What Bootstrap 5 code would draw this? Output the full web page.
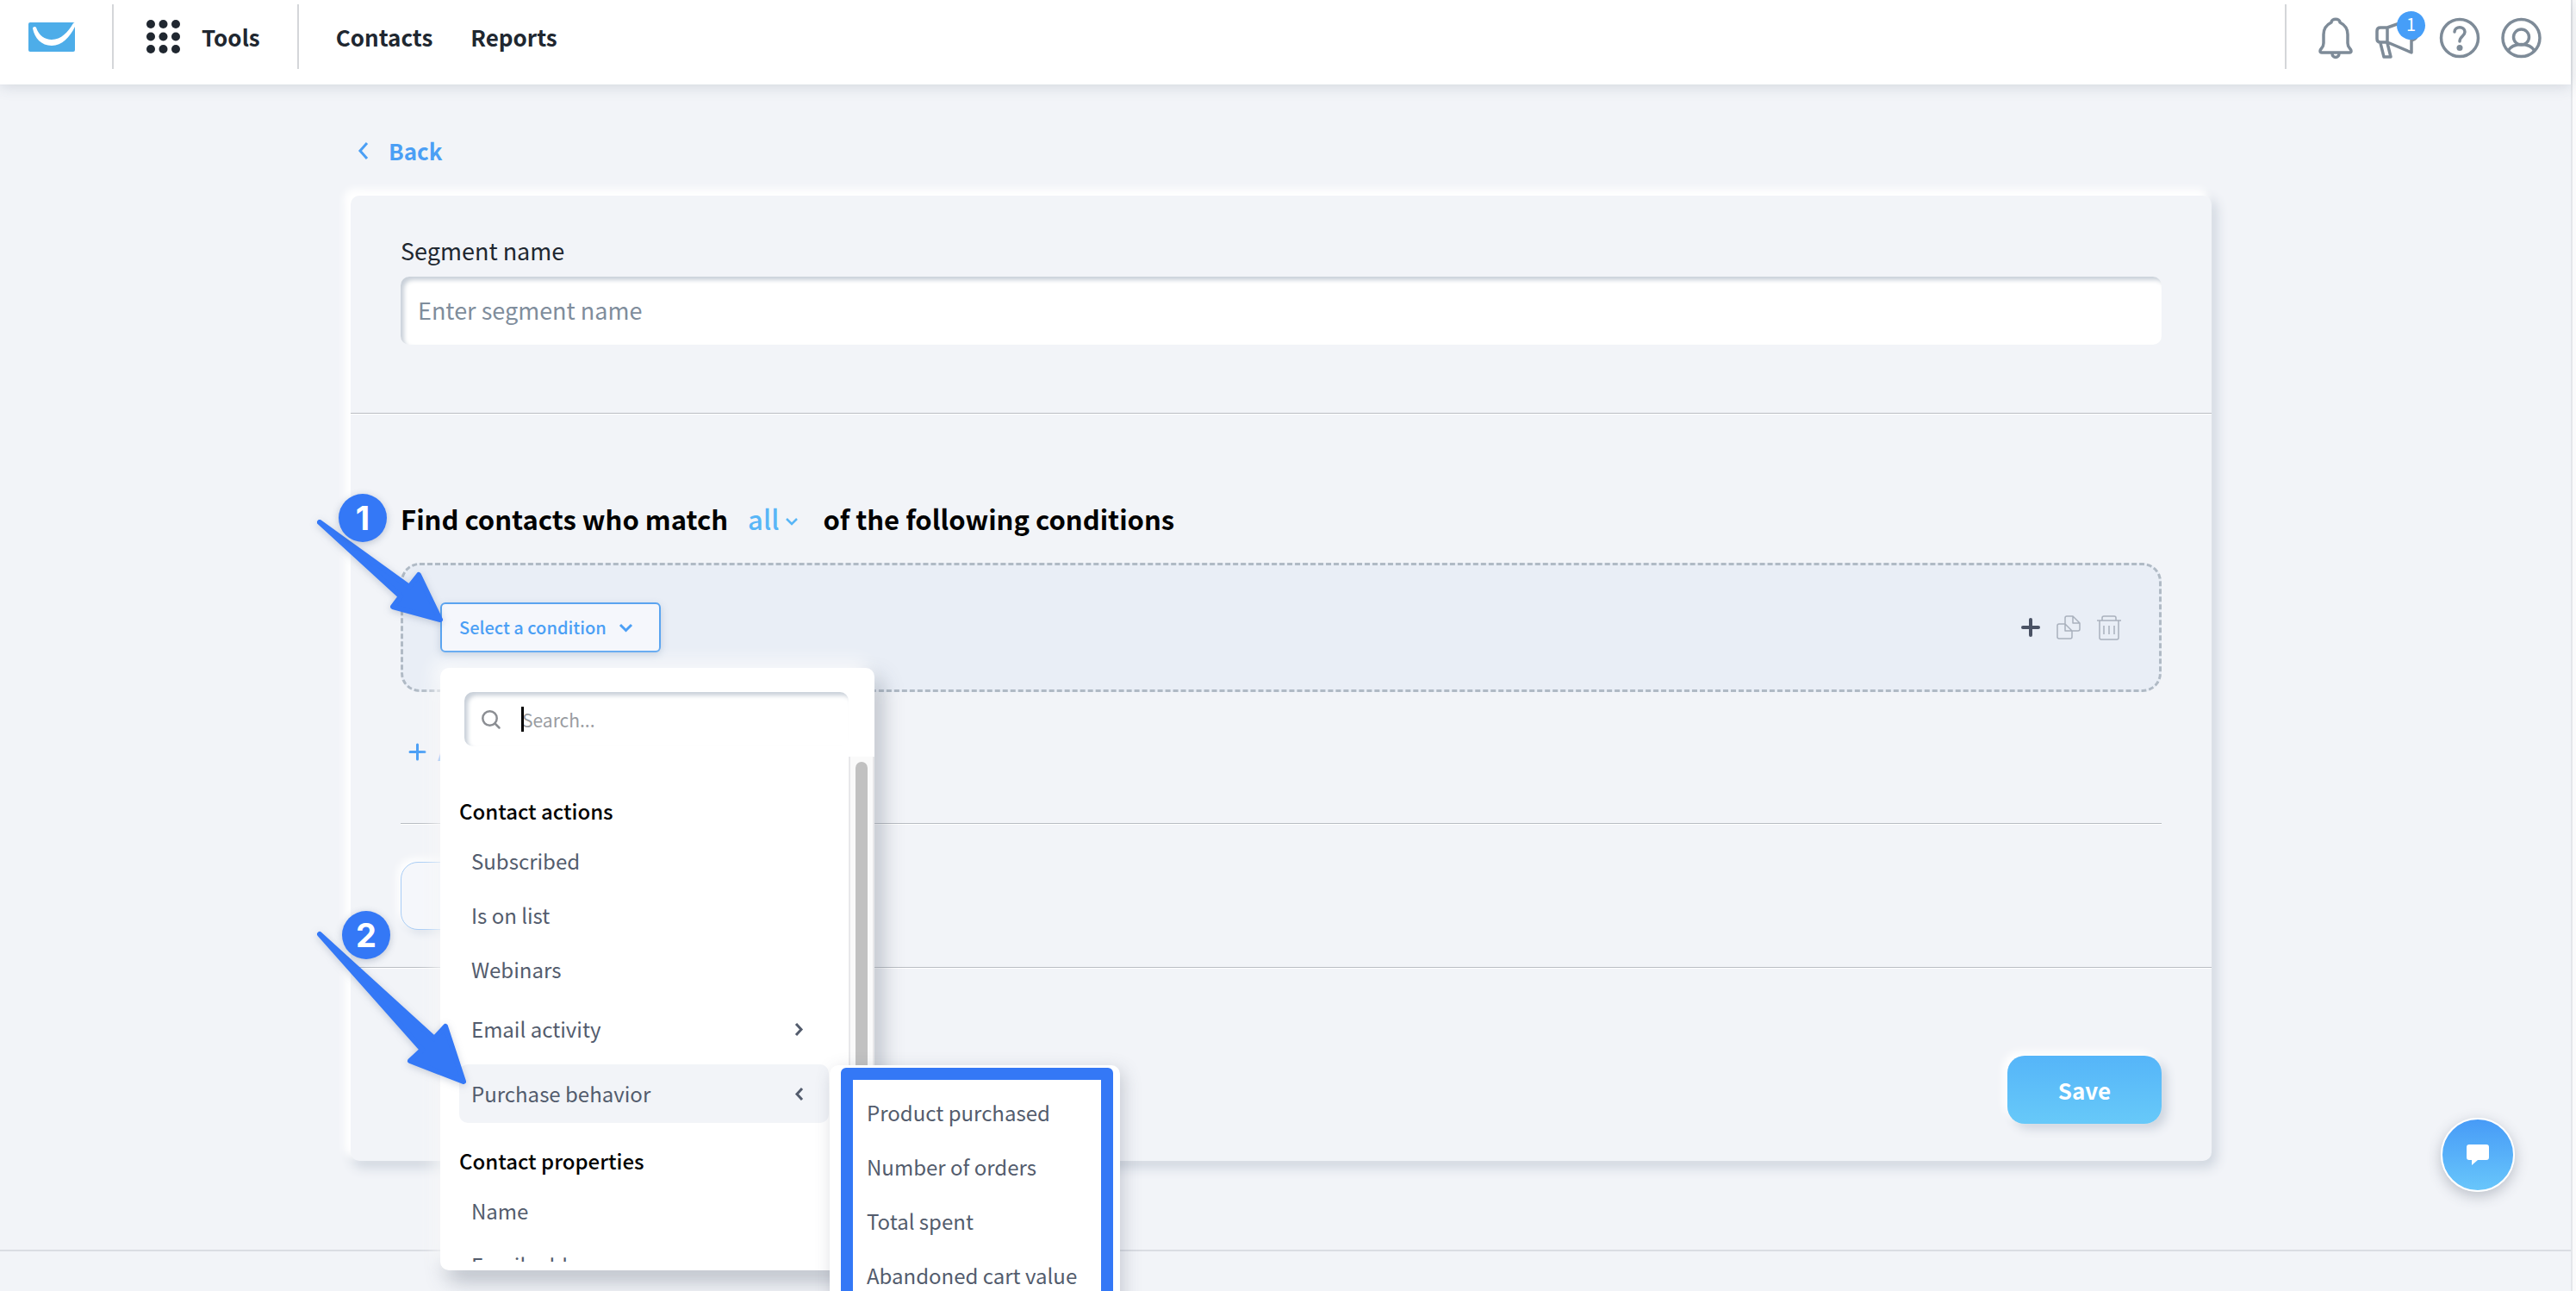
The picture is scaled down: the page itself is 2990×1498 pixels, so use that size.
<!DOCTYPE html>
<html lang="en">
<head>
<meta charset="utf-8">
<meta name="viewport" content="width=device-width, initial-scale=1">
<title>Create segment</title>
<link href="https://cdn.jsdelivr.net/npm/bootstrap@5.3.0/dist/css/bootstrap.min.css" rel="stylesheet">
<style>
:root { --ink:#202730; --slate:#535c6d; --sky:#4b9ff5; --pin:#3478f6; --page:#f2f4f8; --mist:#cfd5de; }
html { overflow: hidden; background: #fafafb; }
body { font-family: "Noto Sans CJK SC", "Open Sans", sans-serif; font-size: 26px; line-height: 36px; color: var(--ink); background: #fafafb; }
.page { margin-right: 4px; border-right: 2px solid #e4e6ea; background: var(--page); min-height: 100vh; }
svg { display: block; flex: none; overflow: visible; }
a { text-decoration: none; }
.plain-btn { border: 0; background: none; padding: 0; color: inherit; }

.topbar { height: 98px; padding: 5px 34px 18px 33px; background: #fff; box-shadow: 0 2px 16px rgba(60,75,100,.18); }
.topbar .nav-link { color: var(--ink); font-weight: 700; font-size: 26px; }
.rule-v { width: 2px; background: #d4d6d9; align-self: stretch; }
.tools { padding: 0 43px 0 38px; gap: 25px; }
.logo { margin-right: 43px; }
.main-links { padding-left: 43px; gap: 44px; }
.top-icons { padding-left: 36px; padding-top: 2px; gap: 25px; color: #7e8b98; }
.count { top: -7px; left: 25px; width: 33px; height: 33px; font-size: 20px; line-height: 30px; background: #469ef8; }

.content { max-width: 2160px; width: calc(100% - 80px); margin: 0 auto; }
.main-area { padding: 59px 10px 103px 0; }
.back { color: var(--sky); font-weight: 700; font-size: 26px; gap: 23px; padding-left: 8px; margin-bottom: 34px; width: max-content; }
.panel { border-radius: 10px; background: var(--page); box-shadow: -6px -6px 8px 2px #fff, 4px 6px 14px 2px #cfd6df; }
.panel > section { padding: 0 58px; }
.line { border-bottom: 1px solid #b9bdc3; box-shadow: 0 1px 0 #fff; margin-bottom: 1px; }
.name-part { padding-top: 46px !important; padding-bottom: 79px !important; }
.name-part label { display: block; font-size: 27px; margin-bottom: 12px; }
.sunk { border: 0; border-radius: 10px; background: #fff; box-shadow: inset 4px 4px 5px #c9d0d9; }
.name-input { height: 79px; width: 100%; padding: 0 20px 2px; font-size: 27px; }
.sunk::placeholder, .name-input::placeholder { color: #7f8d9c; opacity: 1; }
.match-part { padding-top: 101px !important; padding-bottom: 43px !important; }
.match { font-size: 31px; line-height: 40px; font-weight: 700; color: #000; margin-bottom: 31px; gap: 29px; }
.match .plain-btn { font-weight: 500; color: #58b6f7; gap: 8px; margin-left: -6px; }
.match svg { margin-top: 6px; }
.cond { height: 150px; border: 3px dashed #b0bac5; border-radius: 22px; background: #e9eef6; padding: 0 44px 0 43px; }
.pick { height: 58px; width: 256px; border: 2px solid #5aa4f0; border-radius: 6px; background: #f5f7fc; color: var(--sky); font-size: 20px; font-weight: 500; gap: 15px; padding: 0 20px; box-shadow: 0 3px 8px rgba(80,110,150,.25); white-space: nowrap; }
.cond-tools { gap: 19px; color: #a9b1bd; }
.add { color: var(--sky); margin-top: 51px; margin-bottom: 65px; padding-left: 10px; gap: 14px; font-weight: 500; }
.ghost { height: 79px; width: 260px; margin-top: 44px; border: 1px solid #a9cdf5; border-radius: 20px; background: #f5f7fb; box-shadow: -4px -4px 10px #fff, 4px 4px 10px #d9dfe8; }
.save-part { padding-top: 101px !important; padding-bottom: 43px !important; }
.save { width: 179px; height: 79px; border-radius: 20px; border: 0; color: #fff; font-weight: 700; font-size: 26px; background: linear-gradient(#55b5f9, #67c9f9); box-shadow: -5px -5px 10px #fff, 6px 6px 12px #cdd4de; }
.page-end { border-top: 2px solid #dadde3; height: 46px; }

.picker { top: 76px; left: 0; width: 504px; height: 699px; z-index: 5; background: #fff; border-radius: 10px; box-shadow: -8px -8px 20px rgba(255,255,255,.8), 8px 12px 24px rgba(70,80,100,.35); color: var(--slate); }
.finder { margin: 28px 30px 12px 28px; height: 63px; padding-left: 20px; gap: 25px; }
.finder label { color: #8b8e93; }
.finder input { border: 0; outline: 0; background: none; font-size: 21px; width: 340px; padding: 0; color: #333; }
.finder input::placeholder { color: #999ca1; opacity: 1; }
.caret { left: 66px; top: 17px; width: 3px; height: 29px; background: #000; }
.scroller { height: 586px; overflow: hidden; font-size: 24px; font-weight: 500; }
.choices { padding: 45px 23px 0 22px; }
.choices h2 { font-size: 24px; line-height: 36px; font-weight: 500; color: #000; margin: 0 0 8px; }
.choice { display: flex; align-items: center; width: 100%; height: 63px; padding-left: 14px; text-align: left; }
.branch { height: 68px; margin-top: 4px; padding-right: 30px; justify-content: space-between; border-radius: 10px; }
.branch + .branch { margin-top: 7px; margin-bottom: 26px; background: var(--page); }
.track { width: 30px; border: solid #e8e8ea; border-width: 0 2px; background: #fafafa; padding: 6px; }
.thumb { height: 480px; border-radius: 8px; background: #c1c1c1; }
.flyout { top: 461px; left: 452px; width: 337px; z-index: 6; background: #fff; border-radius: 10px; padding: 3px 8px 8px 13px; box-shadow: 4px 6px 20px rgba(70,80,100,.25); font-size: 24px; font-weight: 500; }
.frame { border: 14px solid var(--pin); border-radius: 6px; padding: 6px 0 20px 2px; }
.frame .choice { white-space: nowrap; }

.step { width: 56px; height: 56px; border-radius: 50%; background: var(--pin); color: #fff; font: 700 38px/56px Inter, sans-serif; text-align: center; z-index: 9; box-shadow: 0 2px 8px rgba(60,80,120,.3); }
.step-1 { left: -118px; top: -126px; }
.step-2 { left: -114px; top: 358px; }
.arrow { z-index: 8; fill: var(--pin); stroke: var(--pin); stroke-width: 6; stroke-linejoin: round; pointer-events: none; left: -150px; top: -109px; filter: drop-shadow(0 2px 4px rgba(60,80,120,.25)); }
.chat { position: fixed; right: 71px; bottom: 115px; width: 86px; height: 86px; border-radius: 50%; border: 2px solid #fff; background: linear-gradient(#479bf7, #68c6fb); box-shadow: 0 5px 16px rgba(60,70,90,.3); }
</style>
</head>
<body>
<div class="page">
  <header class="topbar d-flex position-relative">
    <a href="#" class="logo d-flex align-items-center" aria-label="Home">
      <svg width="54" height="34" viewBox="0 0 54 34"><rect width="54" height="34" rx="2" fill="#4dade9"/><path d="M5 7C5 5 8 4 9 6C12 15 19 20 27 20C38 20 46 11 52 1L54 0V5C48 17 39 27 27 27C15 27 7 18 5 7Z" fill="#fff"/></svg>
    </a>
    <div class="rule-v"></div>
    <a href="#" class="nav-link tools d-flex align-items-center">
      <svg width="39" height="39" viewBox="0 0 39 39" fill="#202730"><circle cx="5" cy="5" r="5"/><circle cx="19.500" cy="5" r="5"/><circle cx="34" cy="5" r="5"/><circle cx="5" cy="19.500" r="5"/><circle cx="19.500" cy="19.500" r="5"/><circle cx="34" cy="19.500" r="5"/><circle cx="5" cy="34" r="5"/><circle cx="19.500" cy="34" r="5"/><circle cx="34" cy="34" r="5"/></svg>
      Tools
    </a>
    <div class="rule-v"></div>
    <nav class="main-links d-flex align-items-center">
      <a href="#" class="nav-link">Contacts</a>
      <a href="#" class="nav-link">Reports</a>
    </nav>
    <div class="rule-v ms-auto"></div>
    <div class="top-icons d-flex align-items-center">
      <button class="plain-btn" aria-label="Notifications"><svg width="42" height="48" viewBox="0 0 42 48" fill="none" stroke="currentColor" stroke-width="3.500" stroke-linejoin="round" stroke-linecap="round"><path d="M16 6C16 1 26 1 26 6C32 9 35 14 35 20V30C35 36 39 36 39 39Q39 41 37 41H5Q3 41 3 39C3 36 7 36 7 30V20C7 14 10 9 16 6Z"/><path d="M17 42C17 48 25 48 25 42"/></svg></button>
      <button class="plain-btn position-relative" aria-label="News">
        <svg width="50" height="48" viewBox="0 0 50 48" fill="none" stroke="currentColor" stroke-width="3.500" stroke-linejoin="round"><path d="M6 12H14V29H6Q2 29 2 25V16Q2 12 6 12ZM14 12L42 2V41L14 29M6 30L10 46H18L14 30M42 27Q49 25 49 19"/></svg>
        <span class="count position-absolute rounded-circle text-white">1</span>
      </button>
      <button class="plain-btn" aria-label="Help"><svg width="46" height="46" viewBox="0 0 46 46" fill="none" stroke="currentColor" stroke-width="3.500" stroke-linecap="round"><circle cx="23" cy="23" r="21.500"/><path d="M17 16C17 9 29 9 29 16C29 21 23 21 23 27"/><circle cx="23" cy="34.500" r="3.500" fill="currentColor" stroke="none"/></svg></button>
      <button class="plain-btn" aria-label="Account"><svg width="47" height="46" viewBox="0 0 47 46" fill="none" stroke="currentColor" stroke-width="3.500"><circle cx="23.500" cy="23" r="21.500"/><circle cx="23.500" cy="22" r="9"/><path d="M8 38C14 28 33 28 39 38"/></svg></button>
    </div>
  </header>

  <main class="main-area">
    <div class="content">
      <a href="#" class="back d-flex align-items-center"><svg width="13" height="20" viewBox="0 0 13 20" fill="none" stroke="currentColor" stroke-width="3"><path d="M11 1L3 10L11 19"/></svg>Back</a>
      <form class="panel" onsubmit="return false">
        <section class="name-part line">
          <label for="segment">Segment name</label>
          <input id="segment" type="text" class="sunk name-input" placeholder="Enter segment name">
        </section>

        <section class="match-part line">
          <div class="match d-flex align-items-center">
            <span>Find contacts who match</span>
            <button type="button" class="plain-btn d-flex align-items-center">all<svg width="14" height="9" viewBox="0 0 14 9" fill="none" stroke="currentColor" stroke-width="2.500"><path d="M1 1L7 7L13 1"/></svg></button>
            <span>of the following conditions</span>
          </div>

          <div class="cond d-flex align-items-center justify-content-between">
            <div class="position-relative">
              <button type="button" class="pick d-flex align-items-center">Select a condition<svg width="15" height="9" viewBox="0 0 15 9" fill="none" stroke="currentColor" stroke-width="3"><path d="M1 1L7.500 7.500L14 1"/></svg></button>

              <div class="picker position-absolute">
                <div class="finder sunk position-relative d-flex align-items-center">
                  <label for="find" aria-label="Search"><svg width="22" height="22" viewBox="0 0 22 22" fill="none" stroke="currentColor" stroke-width="2.500" stroke-linecap="round"><circle cx="9.500" cy="9.500" r="8.200"/><path d="M15.500 15.500L20.500 20.500"/></svg></label>
                  <input id="find" type="text" placeholder="Search...">
                  <span class="caret position-absolute"></span>
                </div>
                <div class="scroller d-flex">
                  <div class="choices flex-grow-1">
                    <h2>Contact actions</h2>
                    <button type="button" class="plain-btn choice">Subscribed</button>
                    <button type="button" class="plain-btn choice">Is on list</button>
                    <button type="button" class="plain-btn choice">Webinars</button>
                    <button type="button" class="plain-btn choice branch">Email activity<svg width="9" height="15" viewBox="0 0 9 15" fill="none" stroke="currentColor" stroke-width="3"><path d="M1 1L7 7.500L1 14"/></svg></button>
                    <button type="button" class="plain-btn choice branch">Purchase behavior<svg width="9" height="15" viewBox="0 0 9 15" fill="none" stroke="currentColor" stroke-width="3"><path d="M8 1L2 7.500L8 14"/></svg></button>
                    <h2>Contact properties</h2>
                    <button type="button" class="plain-btn choice">Name</button>
                    <button type="button" class="plain-btn choice">Email address</button>
                  </div>
                  <div class="track"><div class="thumb"></div></div>
                </div>
                <div class="flyout position-absolute">
                  <div class="frame">
                    <button type="button" class="plain-btn choice">Product purchased</button>
                    <button type="button" class="plain-btn choice">Number of orders</button>
                    <button type="button" class="plain-btn choice">Total spent</button>
                    <button type="button" class="plain-btn choice">Abandoned cart value</button>
                  </div>
                </div>
              </div>

              <svg class="arrow position-absolute" width="200" height="680" viewBox="361 590 200 680"><path d="M371 606L475 681L486 667L511 719L456 704L465 692ZM371 1084L504 1205L517 1191L538 1255L476 1231L490 1218Z"/></svg>
              <div class="step step-1 position-absolute">1</div>
              <div class="step step-2 position-absolute">2</div>
            </div>

            <div class="cond-tools d-flex align-items-center">
              <button type="button" class="plain-btn" aria-label="Add"><svg width="22" height="22" viewBox="0 0 22 22" stroke="#4a5264" stroke-width="4" stroke-linecap="round"><path d="M11 2V20M2 11H20"/></svg></button>
              <button type="button" class="plain-btn" aria-label="Duplicate"><svg width="28" height="28" viewBox="0 0 28 28" fill="none" stroke="currentColor" stroke-width="1.500" stroke-linejoin="round"><path d="M10 10H3Q1 10 1 12V25Q1 27 3 27H16Q18 27 18 25V18L10 10M10 10V3Q10 1 12 1H19L27 9V16Q27 18 25 18H10V10M19 1V9H27"/></svg></button>
              <button type="button" class="plain-btn" aria-label="Delete"><svg width="28" height="29" viewBox="0 0 28 29" fill="none" stroke="currentColor" stroke-width="1.500" stroke-linejoin="round"><path d="M0 6H28M3 6V26Q3 28 5 28H23Q25 28 25 26V6M6 6V3Q6 1 8 1H20Q22 1 22 3V6M8 12V22M14 12V22M20 12V22"/></svg></button>
            </div>
          </div>

          <button type="button" class="plain-btn add d-flex align-items-center"><svg width="19" height="19" viewBox="0 0 19 19" stroke="currentColor" stroke-width="3" stroke-linecap="round"><path d="M9.500 1V18M1 9.500H18"/></svg>Add condition</button>
          <div class="line"></div>
          <button type="button" class="ghost d-block" aria-label="Add group"></button>
        </section>

        <section class="save-part d-flex justify-content-end">
          <button type="submit" class="save">Save</button>
        </section>
      </form>
    </div>
  </main>
  <footer class="page-end"></footer>
</div>
<button class="chat d-flex align-items-center justify-content-center" aria-label="Chat"><svg width="26" height="24" viewBox="0 0 26 24" fill="#fff"><path d="M3 0H23Q26 0 26 3V15Q26 18 23 18H13L6 24V18H3Q0 18 0 15V3Q0 0 3 0Z"/></svg></button>
<script src="https://cdn.jsdelivr.net/npm/bootstrap@5.3.0/dist/js/bootstrap.bundle.min.js"></script>
</body>
</html>
